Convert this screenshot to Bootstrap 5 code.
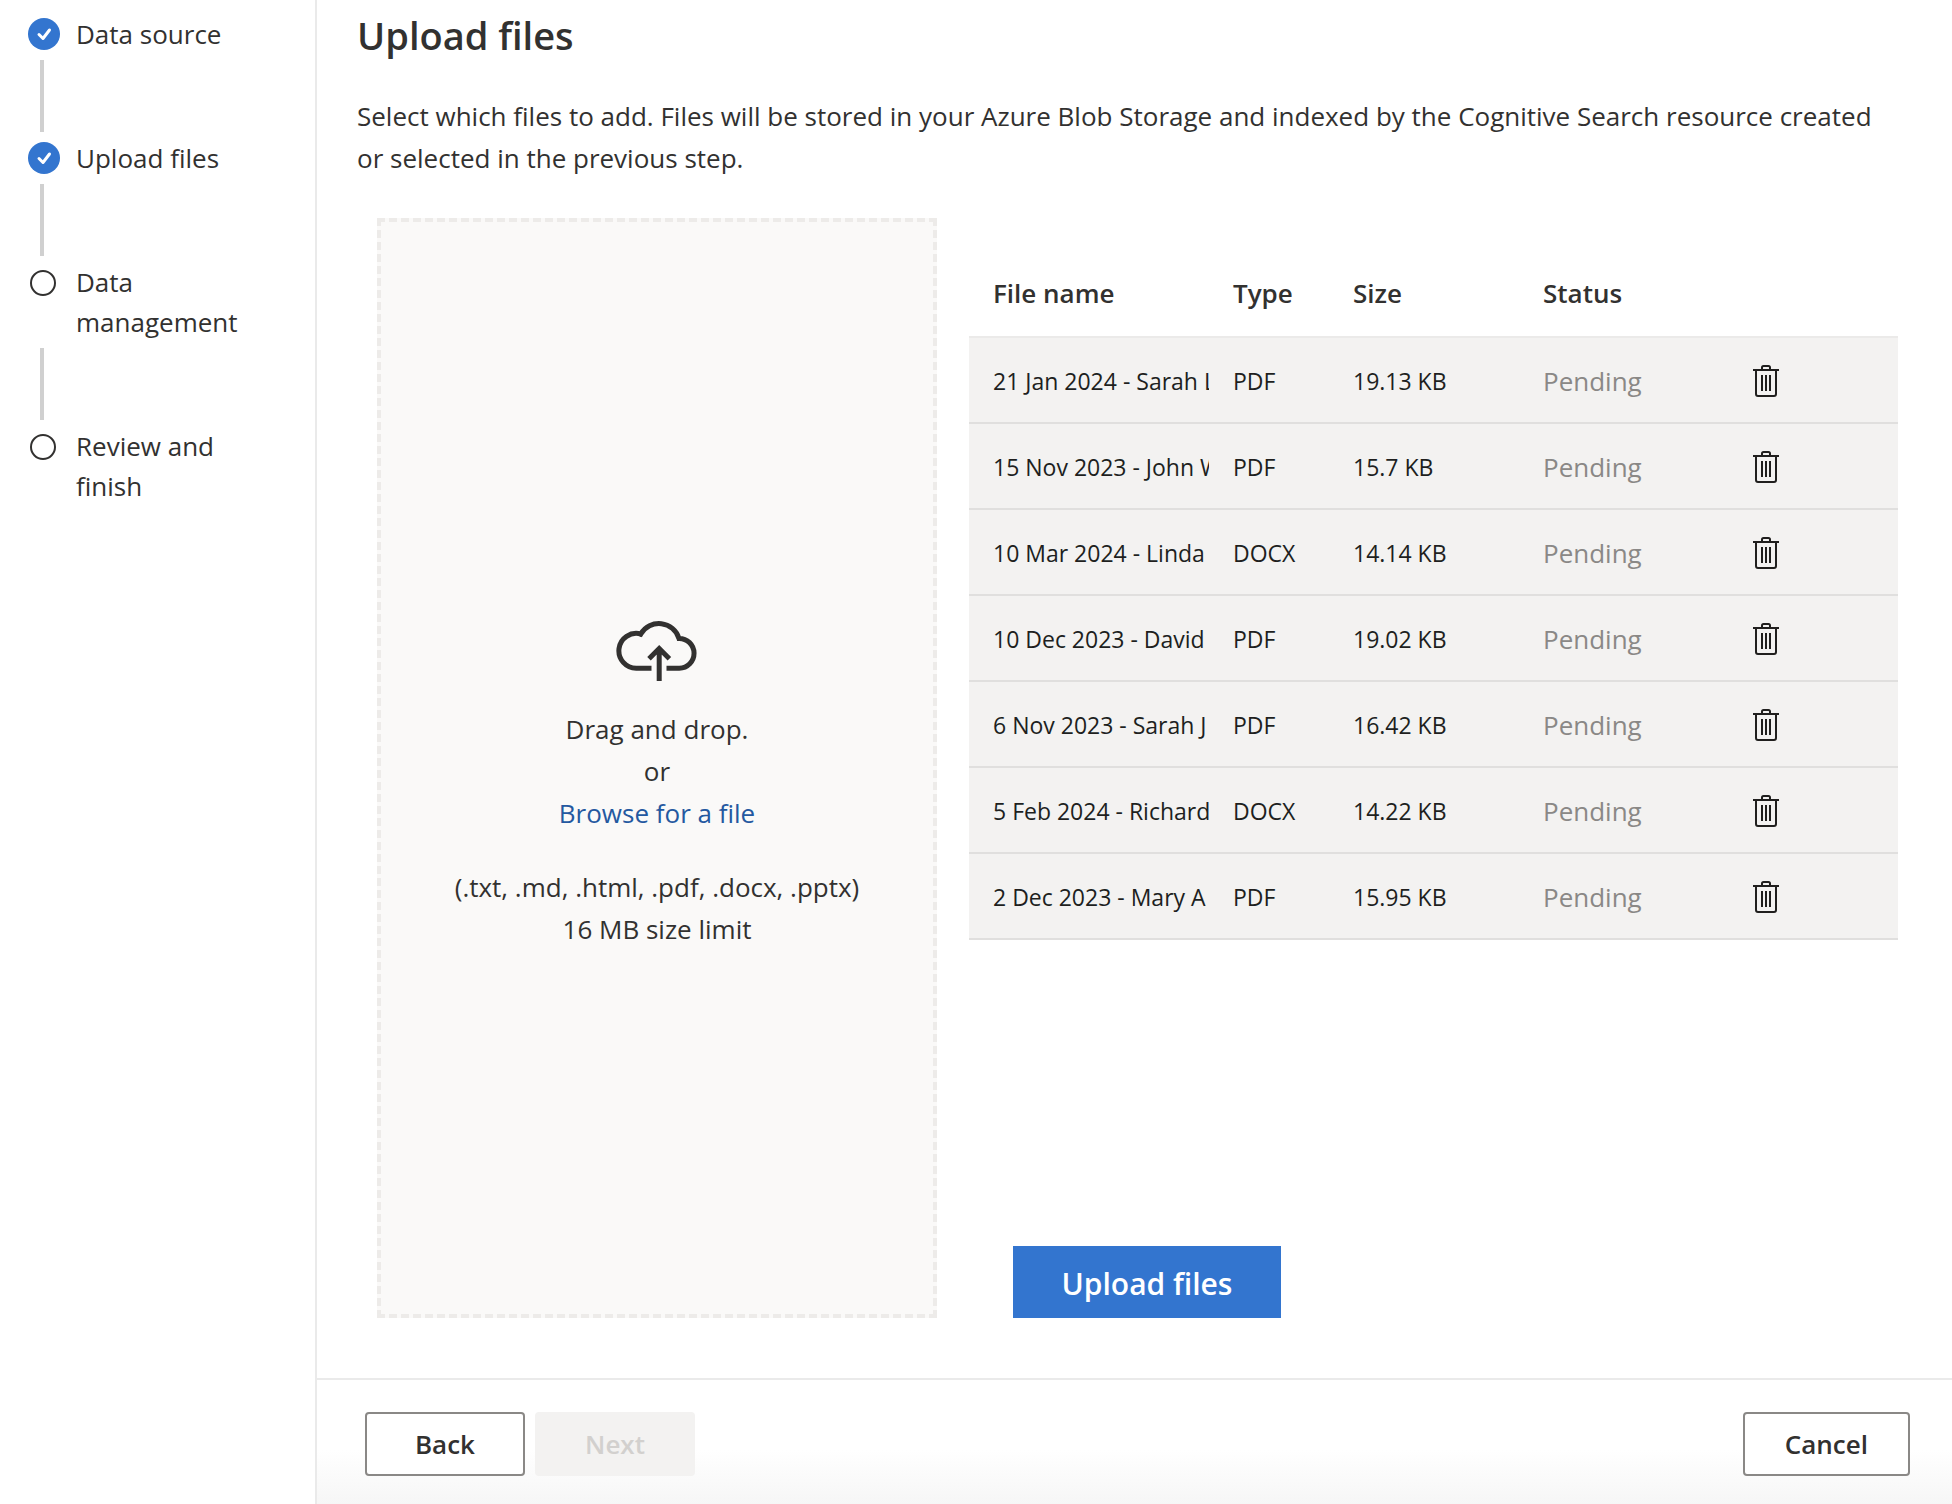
<!DOCTYPE html>
<html lang="en">
<head>
<meta charset="utf-8">
<meta name="viewport" content="width=device-width, initial-scale=1">
<title>Upload files</title>
<link href="https://cdn.jsdelivr.net/npm/bootstrap@5.3.0/dist/css/bootstrap.min.css" rel="stylesheet">
<style>
  body { font-family: "Open Sans", "Noto Sans", sans-serif; font-size: 26px; line-height: 42px; color: #323130; background: #fff; }
  .steps-pane { width: 317px; border-right: 2px solid #eaeaea; padding: 14px 56px 0 28px; line-height: 40px; }
  .step-row { gap: 16px; }
  .step-row svg { width: 32px; height: 40px; }
  .step-link { width: 4px; height: 72px; margin: 6px 0 6px 12px; background: #d0d0d0; }
  .wizard-body { padding: 9px 42px 60px 40px; }
  .wizard-title { font-size: 38px; line-height: 52px; font-weight: 600; margin-bottom: 34px; }
  .wizard-intro { margin-bottom: 39px; padding-right: 24px; }
  .upload-grid { display: grid; grid-template-columns: 560fr 929fr; gap: 32px; padding: 0 12px 0 20px; }
  .drop-zone { border: 4px dashed #edebe9; background: #faf9f8; padding-top: 34px; }
  .drop-zone svg { width: 82px; height: 62px; margin-bottom: 26px; }
  .drop-zone a { color: #2458a0; }
  .file-table { table-layout: fixed; margin-top: 33px; }
  .file-table th, .file-table td { height: 86px; padding: 2px 0 0 24px; border-bottom: 2px solid #e0dfde; vertical-align: middle; white-space: nowrap; overflow: hidden; }
  .file-table thead th, .file-table thead td { padding: 0 0 2px 24px; font-weight: 600; border-bottom-color: #ebeae9; }
  .file-table tbody td { background: #f3f2f1; color: #201f1e; font-size: 23px; }
  .file-table tbody td.file-status { color: #8a8886; font-size: 26px; }
  .col-file { width: 240px; } .col-type { width: 120px; } .col-size { width: 190px; } .col-status { width: 210px; }
  .trash-btn { width: 26px; height: 32px; color: #201f1e; }
  .send-btn { background: #3375cf; color: #fff; font-size: 30px; font-weight: 600; width: 268px; height: 72px; margin-left: 44px; padding: 2px 0 0; }
  .wizard-footer { border-top: 2px solid #eaeaea; padding: 32px 42px 28px 48px; background: linear-gradient(#fff0 70px, #f6f6f6); }
  .foot-btn { min-width: 160px; height: 64px; padding: 0 40px; border: 2px solid #8a8886; border-radius: 4px; background: #fff; color: #323130; font-size: 26px; font-weight: 600; line-height: 42px; }
  .foot-btn:disabled { background: #f3f2f1; border-color: #f3f2f1; color: #d2d0ce; opacity: 1; }
  .foot-gap { gap: 10px; }
</style>
</head>
<body>
<svg class="d-none" aria-hidden="true">
  <symbol id="done" viewBox="0 0 32 40"><circle cx="16" cy="20" r="16" fill="#3375cf"/><path d="M11 20.500l4 4L21.500 16" fill="none" stroke="#fff" stroke-width="3" stroke-linecap="round" stroke-linejoin="round"/></symbol>
  <symbol id="todo" viewBox="0 0 32 40"><circle cx="15" cy="21" r="12" fill="none" stroke="#323130" stroke-width="2"/></symbol>
  <symbol id="trash" viewBox="0 0 26 32"><path d="M0 5h26M9 5V2.500a1.500 1.500 0 0 1 1.500-1.500h5A1.500 1.500 0 0 1 17 2.500V5M3 5v24A2 2 0 0 0 5 31h16a2 2 0 0 0 2-2V5M9 10v16M13 10v16M17 10v16" fill="none" stroke="currentColor" stroke-width="2"/></symbol>
</svg>
<div class="d-flex min-vh-100">
  <nav class="steps-pane flex-shrink-0" aria-label="Steps">
    <div class="step-row d-flex align-items-start"><svg class="flex-shrink-0"><use href="#done"/></svg><span>Data source</span></div>
    <div class="step-link"></div>
    <div class="step-row d-flex align-items-start"><svg class="flex-shrink-0"><use href="#done"/></svg><span>Upload files</span></div>
    <div class="step-link"></div>
    <div class="step-row d-flex align-items-start"><svg class="flex-shrink-0"><use href="#todo"/></svg><span>Data management</span></div>
    <div class="step-link"></div>
    <div class="step-row d-flex align-items-start"><svg class="flex-shrink-0"><use href="#todo"/></svg><span>Review and finish</span></div>
  </nav>
  <div class="d-flex flex-column flex-grow-1">
    <main class="wizard-body d-flex flex-column flex-grow-1">
      <h1 class="wizard-title">Upload files</h1>
      <p class="wizard-intro">Select which files to add. Files will be stored in your Azure Blob Storage and indexed by the Cognitive Search resource created or selected in the previous step.</p>
      <div class="upload-grid flex-grow-1">
        <section class="drop-zone d-flex flex-column align-items-center justify-content-center text-center">
          <svg viewBox="0 0 82 62" fill="none" stroke="#323130" stroke-width="5" aria-hidden="true">
            <path d="M35.500 48.200H20.500A17.400 17.400 0 1 1 24.800 14A21 21 0 0 1 63 18.400A14.900 14.900 0 1 1 63.300 48.200H50.500"/>
            <path d="M43.200 61V28M33 38.700l10.200-10.200L53.400 38.700"/>
            <path d="M24 16.500l2-4M61.200 14l1.500 6"  stroke-width="3"/>
          </svg>
          <div>Drag and drop.</div>
          <div>or</div>
          <a href="#" class="text-decoration-none">Browse for a file</a>
          <div class="mt-4 pt-2">(.txt, .md, .html, .pdf, .docx, .pptx)</div>
          <div>16 MB size limit</div>
        </section>
        <section class="d-flex flex-column align-items-start">
          <table class="file-table w-100">
            <colgroup><col class="col-file"><col class="col-type"><col class="col-size"><col class="col-status"><col></colgroup>
            <thead><tr><th scope="col">File name</th><th scope="col">Type</th><th scope="col">Size</th><th scope="col">Status</th><td></td></tr></thead>
            <tbody>
              <tr><td>21 Jan 2024 - Sarah L</td><td>PDF</td><td>19.13 KB</td><td class="file-status">Pending</td><td><button type="button" class="trash-btn btn p-0 border-0 rounded-0 d-block" aria-label="Remove"><svg class="d-block w-100 h-100"><use href="#trash"/></svg></button></td></tr>
              <tr><td>15 Nov 2023 - John W</td><td>PDF</td><td>15.7 KB</td><td class="file-status">Pending</td><td><button type="button" class="trash-btn btn p-0 border-0 rounded-0 d-block" aria-label="Remove"><svg class="d-block w-100 h-100"><use href="#trash"/></svg></button></td></tr>
              <tr><td>10 Mar 2024 - Linda</td><td>DOCX</td><td>14.14 KB</td><td class="file-status">Pending</td><td><button type="button" class="trash-btn btn p-0 border-0 rounded-0 d-block" aria-label="Remove"><svg class="d-block w-100 h-100"><use href="#trash"/></svg></button></td></tr>
              <tr><td>10 Dec 2023 - David</td><td>PDF</td><td>19.02 KB</td><td class="file-status">Pending</td><td><button type="button" class="trash-btn btn p-0 border-0 rounded-0 d-block" aria-label="Remove"><svg class="d-block w-100 h-100"><use href="#trash"/></svg></button></td></tr>
              <tr><td>6 Nov 2023 - Sarah J</td><td>PDF</td><td>16.42 KB</td><td class="file-status">Pending</td><td><button type="button" class="trash-btn btn p-0 border-0 rounded-0 d-block" aria-label="Remove"><svg class="d-block w-100 h-100"><use href="#trash"/></svg></button></td></tr>
              <tr><td>5 Feb 2024 - Richard</td><td>DOCX</td><td>14.22 KB</td><td class="file-status">Pending</td><td><button type="button" class="trash-btn btn p-0 border-0 rounded-0 d-block" aria-label="Remove"><svg class="d-block w-100 h-100"><use href="#trash"/></svg></button></td></tr>
              <tr><td>2 Dec 2023 - Mary A</td><td>PDF</td><td>15.95 KB</td><td class="file-status">Pending</td><td><button type="button" class="trash-btn btn p-0 border-0 rounded-0 d-block" aria-label="Remove"><svg class="d-block w-100 h-100"><use href="#trash"/></svg></button></td></tr>
            </tbody>
          </table>
          <button type="button" class="send-btn btn rounded-0 border-0 mt-auto">Upload files</button>
        </section>
      </div>
    </main>
    <footer class="wizard-footer d-flex justify-content-between">
      <div class="foot-gap d-flex">
        <button type="button" class="foot-btn btn">Back</button>
        <button type="button" class="foot-btn btn" disabled>Next</button>
      </div>
      <button type="button" class="foot-btn btn">Cancel</button>
    </footer>
  </div>
</div>
<script src="https://cdn.jsdelivr.net/npm/bootstrap@5.3.0/dist/js/bootstrap.bundle.min.js"></script>
</body>
</html>
